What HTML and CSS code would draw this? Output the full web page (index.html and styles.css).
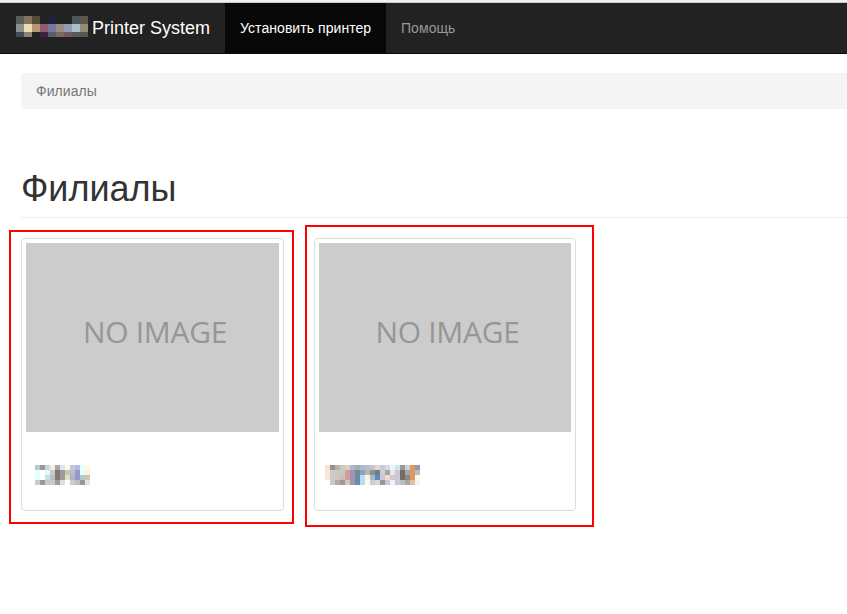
FILE: index.html
```
<!DOCTYPE html>
<html lang="ru">
<head>
<meta charset="utf-8">
<title>Printer System</title>
<link rel="stylesheet" href="styles.css">
</head>
<body>
<nav class="navbar">
  <a class="brand"><svg class="mosaic" width="72" height="21" data-cell="8" data-rows="5a5a57 82735d 554b3a 222222 23223c 222222 222222 4c555c 5a564c|8b918d ecdab5 b59872 8e5c72 7878a0 998c80 949bb5 a8c0c8 918c78|3e4d57 8c8270 222222 3c223c 5c5c70 786a5e 735a5c 555a5c 5a564c"></svg><span>Printer System</span></a>
  <a class="nav-item active">Установить принтер</a>
  <a class="nav-item">Помощь</a>
</nav>
<main class="content">
  <ol class="breadcrumb"><li>Филиалы</li></ol>
  <h1 class="page-title">Филиалы</h1>
  <div class="cards">
    <article class="card">
      <div class="placeholder"><span>NO IMAGE</span></div>
      <div class="caption"><svg class="mosaic" width="55" height="20" data-cell="5" data-rows="b9c9c7 989898 ced5d7 f5eee9 aaa7a8 dce6ef fbfce4 c6c8d6 b2bce0 e3ffff fff7e9|e0ffff ffffff edf5ef c8cac8 817872 9f9c98 c8c9ae b1bfcf 9898c8 e3ffff fff1d7|e0ffff ffffff c7dfe8 b7c1c7 8b786f 9f9c98 dfe0c5 a9b6c5 9898c8 b9c9c7 d0c4b5|cacaca 989898 cacaca cacaca 989ca9 e0e0e0 fefefa cacad3 b9bfc9 989898 d9e7e9"></svg></div>
      <div class="mark mark-first"></div>
    </article>
    <article class="card card-second">
      <div class="placeholder"><span>NO IMAGE</span></div>
      <div class="caption"><svg class="mosaic" width="95" height="20" data-cell="5" data-rows="f5e3d6 929296 b5b4a9 cacabf d8d0cc b4b4bd 9fb0bb a9bdc8 b7c0c8 cac2bb d8dade cacacc d8dade e6f5ff d8e4e8 9a9a9c d2d0cf d79a61 9999a3 e6f5ff|fce6d2 cacad0 cacabf cacabf d39e99 9c94b9 6d8b98 8ea2b8 b0b6bc 8c9292 727d86 cacfd0 9fa8a8 e6e6eb cacad0 736c69 a6a6a8 d79a61 b8bec7|fce6d2 cacad0 d8c4b5 c5c0bd d39e99 9c94b9 6d8b98 b5daff fff3dc a3bacb 5a8cc0 cacad0 f5dac7 cacad0 cacad0 736c69 8c8983 d79a61 fff9e2|ffffff cacad0 b8a89f 999999 d8c4b5 9c94b9 6d8b98 b5daff fff9e6 cacfd0 d4dbd5 91999c cacad0 e6f5ff cacad0 b8bec7 b0a49c e3bd96 e6f5ff"></svg></div>
      <div class="mark mark-second"></div>
    </article>
  </div>
</main>
<script src="mosaic.js"></script>
</body>
</html>
```
FILE: styles.css
```
* { box-sizing: border-box; }
body { margin: 0; background: #fff; color: #333; font: 14px/20px "Liberation Sans", Arial, sans-serif; overflow: hidden; height: 614px; }
.navbar { display: flex; height: 54px; border-top: 3px solid #eff0f2; border-bottom: 1px solid #080808; background: #222; position: relative; }
.navbar::before { content: ""; position: absolute; left: 0; right: 0; top: -1px; height: 1px; background: #c8cacc; }
.brand { display: flex; width: 225px; padding: 13px 0 0 16px; gap: 4px; color: #fff; font-size: 18px; line-height: 24px; white-space: nowrap; }
.mosaic { display: block; flex: none; }
.nav-item { padding: 15px; color: #999; white-space: nowrap; letter-spacing: 0.06px; }
.nav-item.active { width: 161px; background: #080808; color: #fff; }
.content { padding: 19px 0 0 21px; }
.breadcrumb { list-style: none; margin: 0; height: 36px; padding: 8px 15px; background: #f4f4f4; border-radius: 4px 0 0 4px; color: #777; letter-spacing: 0.06px; }
.page-title { margin: 59px 0 20px; height: 50px; padding-top: 1px; border-bottom: 1px solid #eee; font-size: 36px; line-height: 40px; font-weight: 500; }
.cards { display: flex; gap: 30px; }
.card { position: relative; width: 263px; height: 273px; padding: 4px; border: 1px solid #ddd; border-radius: 4px; }
.card-second { width: 262px; }
.placeholder { display: flex; justify-content: center; height: 189px; padding: 69px 0 0 5px; background: #ccc; color: #969696; font: 30px/40px "Open Sans", "Noto Sans", sans-serif; letter-spacing: -0.3px; white-space: nowrap; }
.caption { padding: 33px 9px; }
.card-second .caption { padding-left: 6px; }
.mark { position: absolute; border: 2px solid #f00; }
.mark-first { left: -13px; top: -9px; width: 285px; height: 294px; }
.mark-second { left: -10px; top: -14px; width: 289px; height: 302px; }
```
FILE: mosaic.js
```
document.querySelectorAll('.mosaic').forEach(svg => {
  const size = Number(svg.dataset.cell);
  svg.dataset.rows.split('|').forEach((row, y) => {
    row.split(' ').forEach((color, x) => {
      const rect = document.createElementNS('http://www.w3.org/2000/svg', 'rect');
      rect.setAttribute('x', x * size);
      rect.setAttribute('y', y * size);
      rect.setAttribute('width', size);
      rect.setAttribute('height', size);
      rect.setAttribute('fill', '#' + color);
      svg.appendChild(rect);
    });
  });
});
```
